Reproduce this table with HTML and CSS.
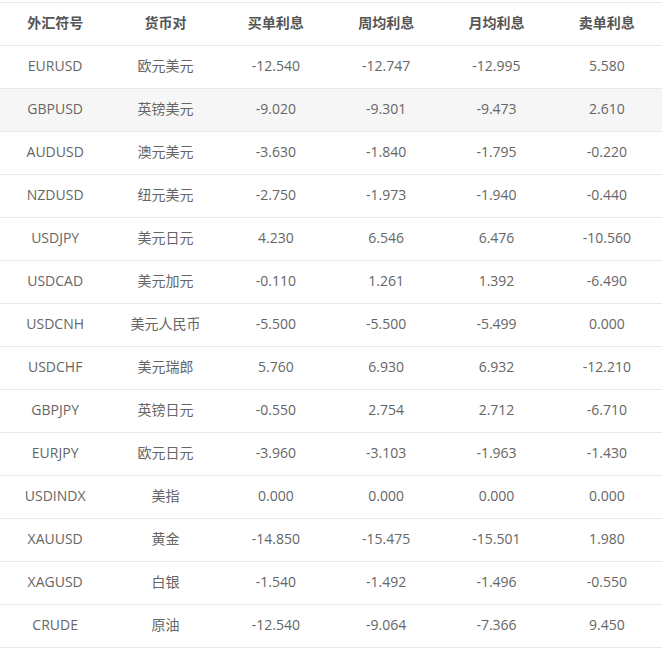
FILE: index.html
```html
<!DOCTYPE html>
<html lang="zh-CN">
<head>
<meta charset="utf-8">
<link rel="stylesheet" href="styles.css">
</head>
<body>
<table class="rates">
  <thead>
    <tr><th>外汇符号</th><th>货币对</th><th>买单利息</th><th>周均利息</th><th>月均利息</th><th>卖单利息</th></tr>
  </thead>
  <tbody>
    <tr><td>EURUSD</td><td>欧元美元</td><td>-12.540</td><td>-12.747</td><td>-12.995</td><td>5.580</td></tr>
    <tr class="hover"><td>GBPUSD</td><td>英镑美元</td><td>-9.020</td><td>-9.301</td><td>-9.473</td><td>2.610</td></tr>
    <tr><td>AUDUSD</td><td>澳元美元</td><td>-3.630</td><td>-1.840</td><td>-1.795</td><td>-0.220</td></tr>
    <tr><td>NZDUSD</td><td>纽元美元</td><td>-2.750</td><td>-1.973</td><td>-1.940</td><td>-0.440</td></tr>
    <tr><td>USDJPY</td><td>美元日元</td><td>4.230</td><td>6.546</td><td>6.476</td><td>-10.560</td></tr>
    <tr><td>USDCAD</td><td>美元加元</td><td>-0.110</td><td>1.261</td><td>1.392</td><td>-6.490</td></tr>
    <tr><td>USDCNH</td><td>美元人民币</td><td>-5.500</td><td>-5.500</td><td>-5.499</td><td>0.000</td></tr>
    <tr><td>USDCHF</td><td>美元瑞郎</td><td>5.760</td><td>6.930</td><td>6.932</td><td>-12.210</td></tr>
    <tr><td>GBPJPY</td><td>英镑日元</td><td>-0.550</td><td>2.754</td><td>2.712</td><td>-6.710</td></tr>
    <tr><td>EURJPY</td><td>欧元日元</td><td>-3.960</td><td>-3.103</td><td>-1.963</td><td>-1.430</td></tr>
    <tr><td>USDINDX</td><td>美指</td><td>0.000</td><td>0.000</td><td>0.000</td><td>0.000</td></tr>
    <tr><td>XAUUSD</td><td>黄金</td><td>-14.850</td><td>-15.475</td><td>-15.501</td><td>1.980</td></tr>
    <tr><td>XAGUSD</td><td>白银</td><td>-1.540</td><td>-1.492</td><td>-1.496</td><td>-0.550</td></tr>
    <tr><td>CRUDE</td><td>原油</td><td>-12.540</td><td>-9.064</td><td>-7.366</td><td>9.450</td></tr>
  </tbody>
</table>
</body>
</html>
```
FILE: styles.css
```css
html, body {
  margin: 0;
  padding: 0;
  background: #fff;
}
body {
  padding-top: 2px;
  font-family: "Open Sans", "Noto Sans CJK SC", sans-serif;
  font-size: 14px;
}
.rates {
  width: 662px;
  border-collapse: collapse;
  table-layout: fixed;
}
.rates th,
.rates td {
  height: 40px;
  padding: 0 0 2px;
  line-height: 20px;
  text-align: center;
  vertical-align: middle;
  border-bottom: 1px solid #e8e8e8;
}
.rates th {
  border-top: 1px solid #e8e8e8;
  font-weight: bold;
  color: #555;
}
.rates td {
  color: #666;
}
.rates tr.hover td {
  background: #f6f6f6;
}
```
